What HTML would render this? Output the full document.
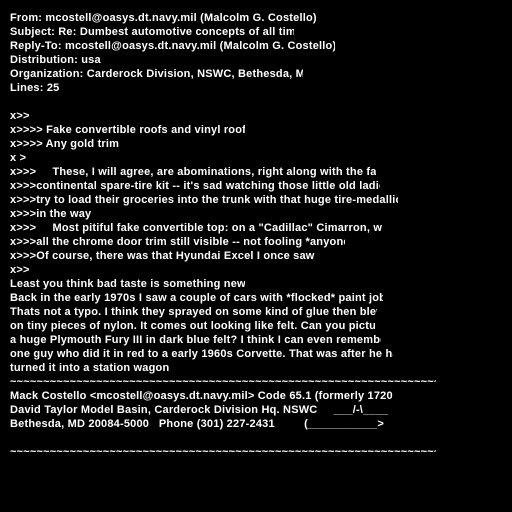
<!DOCTYPE html>
<html><head><style>
html,body{margin:0;background:#000;width:512px;height:512px;overflow:hidden}
body{padding-top:12px;box-sizing:border-box}
.l{position:relative;left:10px;height:14px;line-height:14px;font:bold 11px "Liberation Sans",sans-serif;letter-spacing:0.2px;color:#fff;white-space:pre;overflow:hidden;-webkit-font-smoothing:none}
</style></head><body>
<div class="l" style="width:330px">From: mcostell@oasys.dt.navy.mil (Malcolm G. Costello)</div>
<div class="l" style="width:284px">Subject: Re: Dumbest automotive concepts of all time</div>
<div class="l" style="width:325px">Reply-To: mcostell@oasys.dt.navy.mil (Malcolm G. Costello)</div>
<div class="l">Distribution: usa</div>
<div class="l" style="width:293px">Organization: Carderock Division, NSWC, Bethesda, MD</div>
<div class="l">Lines: 25</div>
<div class="l"> </div>
<div class="l">x&gt;&gt;</div>
<div class="l" style="width:235px">x&gt;&gt;&gt;&gt; Fake convertible roofs and vinyl roofs</div>
<div class="l">x&gt;&gt;&gt;&gt; Any gold trim</div>
<div class="l">x &gt;</div>
<div class="l" style="width:366px">x&gt;&gt;&gt;     These, I will agree, are abominations, right along with the fake</div>
<div class="l" style="width:370px">x&gt;&gt;&gt;continental spare-tire kit -- it's sad watching those little old ladies</div>
<div class="l" style="width:388px">x&gt;&gt;&gt;try to load their groceries into the trunk with that huge tire-medallion</div>
<div class="l">x&gt;&gt;&gt;in the way</div>
<div class="l" style="width:372px">x&gt;&gt;&gt;     Most pitiful fake convertible top: on a "Cadillac" Cimarron, with</div>
<div class="l" style="width:335px">x&gt;&gt;&gt;all the chrome door trim still visible -- not fooling *anyone*</div>
<div class="l">x&gt;&gt;&gt;Of course, there was that Hyundai Excel I once saw</div>
<div class="l">x&gt;&gt;</div>
<div class="l" style="width:235px">Least you think bad taste is something new</div>
<div class="l" style="width:373px">Back in the early 1970s I saw a couple of cars with *flocked* paint jobs.</div>
<div class="l" style="width:367px">Thats not a typo. I think they sprayed on some kind of glue then blew</div>
<div class="l" style="width:365px">on tiny pieces of nylon. It comes out looking like felt. Can you picture</div>
<div class="l" style="width:371px">a huge Plymouth Fury III in dark blue felt? I think I can even remember</div>
<div class="l" style="width:383px">one guy who did it in red to a early 1960s Corvette. That was after he had</div>
<div class="l">turned it into a station wagon</div>
<div class="l" style="width:426px">~~~~~~~~~~~~~~~~~~~~~~~~~~~~~~~~~~~~~~~~~~~~~~~~~~~~~~~~~~~~~~~~~~~~~~~~~~~~~~</div>
<div class="l" style="width:383px">Mack Costello &lt;mcostell@oasys.dt.navy.mil&gt; Code 65.1 (formerly 1720.1)</div>
<div class="l">David Taylor Model Basin, Carderock Division Hq. NSWC     ___/-\____</div>
<div class="l">Bethesda, MD 20084-5000   Phone (301) 227-2431         (___________&gt;</div>
<div class="l"> </div>
<div class="l" style="width:426px">~~~~~~~~~~~~~~~~~~~~~~~~~~~~~~~~~~~~~~~~~~~~~~~~~~~~~~~~~~~~~~~~~~~~~~~~~~~~~~</div>
</body></html>
